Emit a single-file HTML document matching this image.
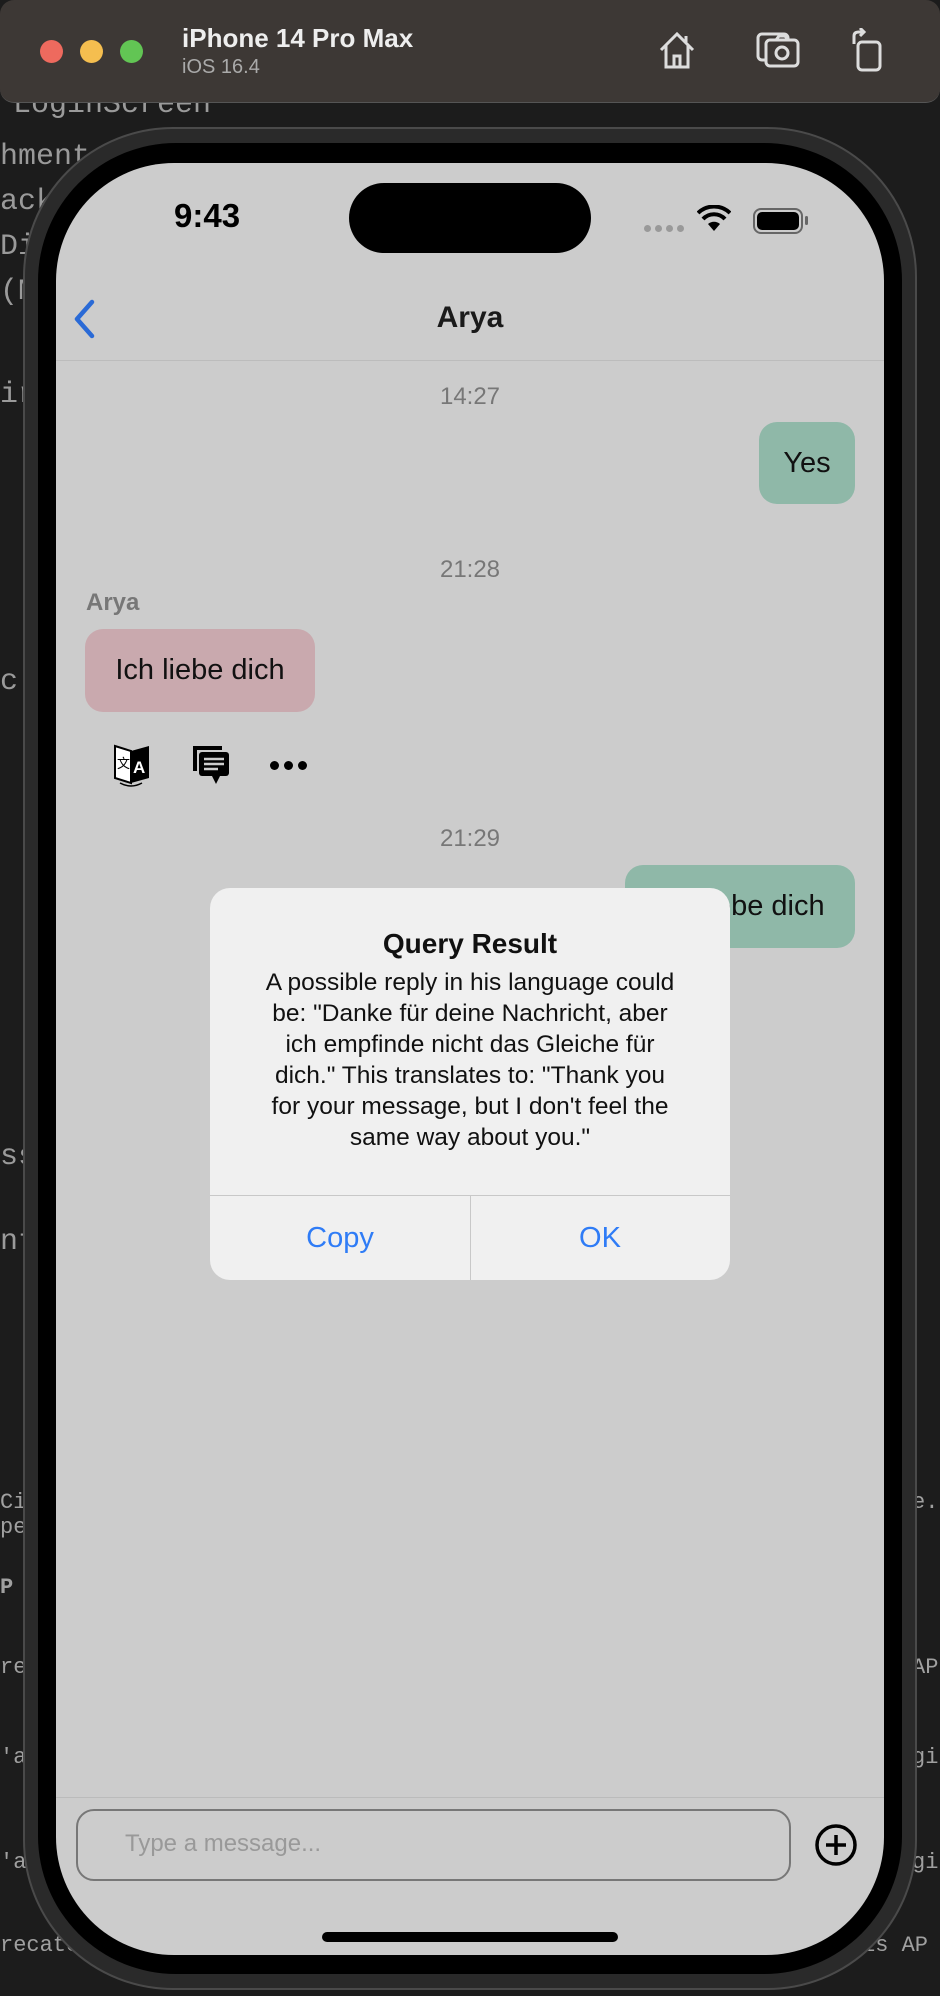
<!DOCTYPE html>
<html><head><meta charset="utf-8">
<style>
*{margin:0;padding:0;box-sizing:border-box}
html,body{width:940px;height:1996px;overflow:hidden;background:#1c1c1c;font-family:"Liberation Sans",sans-serif}
.abs{position:absolute}
.code{position:absolute;font-family:"Liberation Mono",monospace;color:#9a9a9a;font-size:30px;white-space:nowrap}
.codes{position:absolute;font-family:"Liberation Mono",monospace;color:#a0a0a0;font-size:22px;white-space:nowrap}
#title{left:0;top:0;width:940px;height:103px;background:#3d3835;border-radius:14px;border-bottom:1px solid #555}
.tl{position:absolute;top:40px;width:23px;height:23px;border-radius:50%}
#frame{left:23px;top:127px;width:894px;height:1863px;border-radius:150px;background:#2a2a2a;border:2px solid #4a4a4a}
#bezel{left:38px;top:143px;width:864px;height:1831px;border-radius:138px;background:#000}
#screen{left:56px;top:163px;width:828px;height:1792px;border-radius:118px;background:#cccccc;overflow:hidden}
.ts{position:absolute;width:828px;text-align:center;color:#777;font-size:24px}
.bub{position:absolute;border-radius:18px;font-size:29px;color:#111;display:flex;align-items:center;justify-content:center}
</style></head><body>
<div class="code" style="left:13px;top:88px">LoginScreen</div>
<div class="code" style="left:0;top:140px">hment</div>
<div class="code" style="left:0;top:185px">ack</div>
<div class="code" style="left:0;top:230px">Di</div>
<div class="code" style="left:0;top:275px">(M</div>
<div class="code" style="left:0;top:378px">ir</div>
<div class="code" style="left:0;top:665px">c</div>
<div class="code" style="left:0;top:1140px">ss</div>
<div class="code" style="left:0;top:1225px">nt</div>
<div class="codes" style="left:0;top:1490px">Ci</div>
<div class="codes" style="left:0;top:1515px">pe</div>
<div class="codes" style="left:0;top:1575px;font-weight:bold">P</div>
<div class="codes" style="left:0;top:1655px">re</div>
<div class="codes" style="left:0;top:1745px">'a</div>
<div class="codes" style="left:0;top:1850px">'a</div>
<div class="codes" style="left:0;top:1933px">recate</div>
<div class="codes" style="left:912px;top:1490px">e.</div>
<div class="codes" style="left:912px;top:1655px">AP</div>
<div class="codes" style="left:912px;top:1745px">gi</div>
<div class="codes" style="left:912px;top:1850px">gi</div>
<div class="codes" style="left:862px;top:1933px">is AP</div>

<div id="title" class="abs">
  <div class="tl" style="left:40px;background:#ee6a5e"></div>
  <div class="tl" style="left:80px;background:#f5be4f"></div>
  <div class="tl" style="left:120px;background:#62c554"></div>
  <div class="abs" style="left:182px;top:23px;color:#eee;font-size:26px;font-weight:bold">iPhone 14 Pro Max</div>
  <div class="abs" style="left:182px;top:56px;color:#aaa;font-size:20px">iOS 16.4</div>
  <svg class="abs" style="left:656px;top:30px" width="42" height="40" viewBox="0 0 42 40" fill="none" stroke="#ddd" stroke-width="3"><path d="M5 20 L21 4 L37 20 M10 15 V37 H32 V15 M18 37 V26 H24 V37"/><path d="M30 6 V12"/></svg>
  <svg class="abs" style="left:756px;top:30px" width="44" height="40" viewBox="0 0 44 40" fill="none" stroke="#ddd" stroke-width="3"><rect x="2" y="4" width="30" height="26" rx="4"/><rect x="10" y="10" width="32" height="26" rx="4" fill="#3d3835"/><circle cx="26" cy="23" r="6"/><path d="M20 10 l3 -4 h6 l3 4"/></svg>
  <svg class="abs" style="left:850px;top:28px" width="34" height="44" viewBox="0 0 34 44" fill="none" stroke="#ddd" stroke-width="3"><rect x="8" y="14" width="22" height="28" rx="4"/><path d="M4 16 V8 Q4 4 9 4 H14 M10 0 L14 4 L10 8"/></svg>
</div>

<div id="frame" class="abs"></div>
<div id="bezel" class="abs"></div>
<div id="screen" class="abs">
  <div class="abs" style="left:293px;top:20px;width:242px;height:70px;border-radius:35px;background:#000"></div>
  <div class="abs" style="left:118px;top:34px;font-size:33px;font-weight:bold;color:#000">9:43</div>
  <div class="abs" style="left:588px;top:62px;display:flex;gap:4px"><i style="display:block;width:7px;height:7px;border-radius:50%;background:#999"></i><i style="display:block;width:7px;height:7px;border-radius:50%;background:#999"></i><i style="display:block;width:7px;height:7px;border-radius:50%;background:#999"></i><i style="display:block;width:7px;height:7px;border-radius:50%;background:#999"></i></div>
  <svg class="abs" style="left:641px;top:42px" width="34" height="28" viewBox="0 0 34 28"><path d="M17 26 L11 19 A9 9 0 0 1 23 19 Z" fill="#000"/><path d="M6 14 A15 15 0 0 1 28 14" stroke="#000" stroke-width="4" fill="none"/><path d="M1 8 A23 23 0 0 1 33 8" stroke="#000" stroke-width="4" fill="none"/></svg>
  <div class="abs" style="left:697px;top:45px;width:50px;height:26px;border:2px solid #666;border-radius:8px;padding:2px"><div style="width:100%;height:100%;background:#000;border-radius:5px"></div></div>
  <div class="abs" style="left:749px;top:53px;width:3px;height:9px;background:#666;border-radius:2px"></div>

  <svg class="abs" style="left:16px;top:136px" width="24" height="40" viewBox="0 0 24 40"><path d="M20 3 L5 20 L20 37" stroke="#2a6ad6" stroke-width="4.5" fill="none" stroke-linecap="round" stroke-linejoin="round"/></svg>
  <div class="abs" style="left:0;top:138px;width:828px;text-align:center;font-size:30px;font-weight:bold;color:#1a1a1a">Arya</div>
  <div class="abs" style="left:0;top:197px;width:828px;height:1px;background:#bcbcbc"></div>

  <div class="ts" style="top:220px">14:27</div>
  <div class="bub" style="left:703px;top:259px;width:96px;height:82px;background:#8fb8a8">Yes</div>
  <div class="ts" style="top:393px">21:28</div>
  <div class="abs" style="left:30px;top:426px;font-size:24px;font-weight:bold;color:#777">Arya</div>
  <div class="bub" style="left:29px;top:466px;width:230px;height:83px;background:#c9a9ae">Ich liebe dich</div>
  <svg class="abs" style="left:56px;top:578px" width="40" height="46" viewBox="0 0 40 46"><path d="M3 5 L19 10 V42 L3 37 Z" fill="#fff" stroke="#000" stroke-width="2"/><path d="M19 10 L37 5 V37 L19 42 Z" fill="#000"/><text x="21" y="32" font-size="17" font-weight="bold" fill="#fff" font-family="Liberation Sans">A</text><text x="5" y="27" font-size="13" fill="#000" font-family="Noto Sans CJK SC">文</text><path d="M8 42 Q19 48 30 42" stroke="#000" stroke-width="1.5" fill="none"/></svg>
  <svg class="abs" style="left:134px;top:580px" width="42" height="44" viewBox="0 0 42 44"><path d="M3 3 H32 V7 H7 V28 H3 Z" fill="#000"/><rect x="9" y="9" width="30" height="24" rx="3" fill="#000"/><path d="M22 33 L26 41 L30 33 Z" fill="#000"/><path d="M14 16 H34 M14 21 H34 M14 26 H28" stroke="#ccc" stroke-width="2.5"/></svg>
  <div class="abs" style="left:214px;top:598px;display:flex;gap:5px"><i style="display:block;width:9px;height:9px;border-radius:50%;background:#000"></i><i style="display:block;width:9px;height:9px;border-radius:50%;background:#000"></i><i style="display:block;width:9px;height:9px;border-radius:50%;background:#000"></i></div>
  <div class="ts" style="top:662px">21:29</div>
  <div class="bub" style="left:569px;top:702px;width:230px;height:83px;background:#8fb8a8">Ich liebe dich</div>

  <div class="abs" style="left:154px;top:725px;width:520px;height:392px;border-radius:20px;background:#f0f0f0;overflow:hidden">
    <div style="text-align:center;font-size:28px;font-weight:bold;color:#111;margin-top:40px">Query Result</div>
    <div style="text-align:center;font-size:24.5px;line-height:31px;color:#111;margin-top:7px;white-space:nowrap">A possible reply in his language could<br>be: "Danke für deine Nachricht, aber<br>ich empfinde nicht das Gleiche für<br>dich." This translates to: "Thank you<br>for your message, but I don't feel the<br>same way about you."</div>
    <div class="abs" style="left:0;top:307px;width:520px;height:1px;background:#c8c8c8"></div>
    <div class="abs" style="left:260px;top:307px;width:1px;height:85px;background:#c8c8c8"></div>
    <div class="abs" style="left:0;top:334px;width:260px;text-align:center;font-size:29px;color:#2f7cf6">Copy</div>
    <div class="abs" style="left:260px;top:334px;width:260px;text-align:center;font-size:29px;color:#2f7cf6">OK</div>
  </div>

  <div class="abs" style="left:0;top:1634px;width:828px;height:1px;background:#bbb"></div>
  <div class="abs" style="left:20px;top:1646px;width:715px;height:72px;border:2px solid #777;border-radius:18px"></div>
  <div class="abs" style="left:69px;top:1667px;font-size:24px;color:#999">Type a message...</div>
  <svg class="abs" style="left:758px;top:1660px" width="44" height="44" viewBox="0 0 44 44"><circle cx="22" cy="22" r="19" stroke="#000" stroke-width="3.5" fill="none"/><path d="M22 12 V32 M12 22 H32" stroke="#000" stroke-width="3.5"/></svg>
  <div class="abs" style="left:266px;top:1769px;width:296px;height:10px;border-radius:5px;background:#000"></div>
</div>
</body></html>
